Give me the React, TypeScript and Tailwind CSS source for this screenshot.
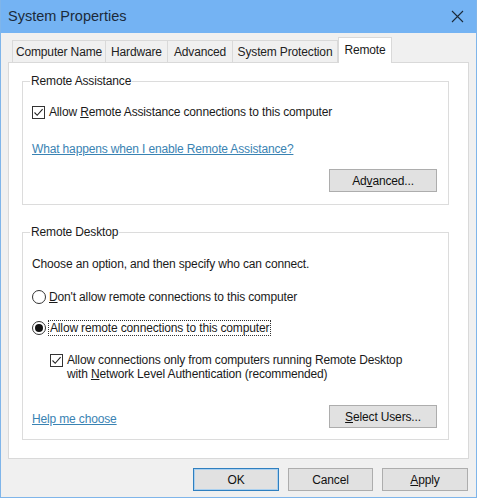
import React from "react";

const font = { fontFamily: '"Liberation Sans", Arial, sans-serif', letterSpacing: "-0.15px" };

function CheckBox() {
  return (
    <span className="w-[13px] h-[13px] shrink-0 border border-[#333] bg-white flex items-center justify-center">
      <svg width="11" height="11" viewBox="0 0 11 11">
        <path d="M1.5 5.5 L4.2 8.3 L9.6 2.2" fill="none" stroke="#222" strokeWidth="1.1" />
      </svg>
    </span>
  );
}

function Radio({ on }: { on?: boolean }) {
  return (
    <span className="w-[14px] h-[14px] shrink-0 rounded-full border border-[#333] bg-white flex items-center justify-center">
      {on && <span className="w-[8px] h-[8px] rounded-full bg-[#111]" />}
    </span>
  );
}

function Btn({ children, primary }: { children: React.ReactNode; primary?: boolean }) {
  return (
    <div
      className={
        "h-[23px] flex items-center justify-center bg-[#e1e1e1] text-[#111] " +
        (primary ? "border border-[#2f7fbf] shadow-[inset_0_0_0_1px_#aad0ef]" : "border border-[#adadad]")
      }
    >
      {children}
    </div>
  );
}

const tabs = [
  { label: "Computer Name", w: "w-[94px]" },
  { label: "Hardware", w: "w-[63px]" },
  { label: "Advanced", w: "w-[66px]" },
  { label: "System Protection", w: "w-[106px]" },
];

export default function App() {
  return (
    <div className="w-[477px] h-[500px] bg-white text-[12px] text-[#1a1a1a]" style={font}>
      <div className="h-[498px] flex flex-col border-x border-b border-[#7fb5ea] bg-[#f0f0f0]">
        <div className="h-[33px] shrink-0 bg-[#74b3f3] flex items-center justify-between pl-[7px] pr-[12px]">
          <span className="text-[14.5px] text-[#1b2a3a] tracking-normal">System Properties</span>
          <svg width="13" height="13" viewBox="0 0 13 13">
            <path d="M1 1 L12 12 M12 1 L1 12" stroke="#1b2a3a" strokeWidth="1.1" />
          </svg>
        </div>

        <div className="flex items-end pl-[11px] pt-[4px] h-[29px]">
          {tabs.map((t) => (
            <div
              key={t.label}
              className={`${t.w} h-[22px] -mr-px border border-b-0 border-[#d9d9d9] bg-[#f0f0f0] flex items-center justify-center text-[#222]`}
            >
              {t.label}
            </div>
          ))}
          <div className="w-[54px] h-[26px] ml-px relative z-10 mb-[-1px] border border-b-0 border-[#d9d9d9] bg-white flex items-start justify-center pt-[3px]">
            Remote
          </div>
        </div>

        <div className="mx-[7px] h-[397px] border border-[#d9d9d9] bg-white pl-[13px] pr-[19px] pt-[10px]">
          <fieldset className="border border-[#dcdcdc] px-[9px] pb-[12px]">
            <legend className="px-[1px] leading-[16px] ml-[-2px]">Remote Assistance</legend>
            <div className="mt-[16px] h-[14px] flex items-center gap-[4px]">
              <CheckBox />
              <span>
                Allow <span className="underline">R</span>emote Assistance connections to this computer
              </span>
            </div>
            <div className="mt-[23px] h-[14px] flex items-center">
              <span className="text-[#3a83b3] underline">What happens when I enable Remote Assistance?</span>
            </div>
            <div className="mt-[13px] flex justify-end pr-[2px]">
              <div className="w-[108px]">
                <Btn>
                  <span>
                    Ad<span className="underline">v</span>anced...
                  </span>
                </Btn>
              </div>
            </div>
          </fieldset>

          <fieldset className="mt-[19px] border border-[#dcdcdc] px-[9px] pb-[11px]">
            <legend className="px-[1px] leading-[16px] ml-[-2px]">Remote Desktop</legend>
            <div className="mt-[17px] h-[14px] flex items-center">Choose an option, and then specify who can connect.</div>
            <div className="mt-[18px] h-[16px] flex items-center gap-[3px]">
              <Radio />
              <span>
                <span className="underline">D</span>on't allow remote connections to this computer
              </span>
            </div>
            <div className="mt-[15px] h-[16px] flex items-center gap-[2px]">
              <Radio on />
              <span className="border border-dotted border-[#333] px-px leading-[14px]">
                Allow remote connections to this computer
              </span>
            </div>
            <div className="mt-[17px] pl-[18px] flex items-start gap-[4px]">
              <div className="pt-[1px]">
                <CheckBox />
              </div>
              <div className="leading-[14px]">
                Allow connections only from computers running Remote Desktop
                <br />
                with <span className="underline">N</span>etwork Level Authentication (recommended)
              </div>
            </div>
            <div className="mt-[24px] flex items-center justify-between pr-[2px]">
              <span className="text-[#3a83b3] underline pt-[5px]">Help me choose</span>
              <div className="w-[108px]">
                <Btn>
                  <span>
                    <span className="underline">S</span>elect Users...
                  </span>
                </Btn>
              </div>
            </div>
          </fieldset>
        </div>

        <div className="mt-[9px] flex justify-end gap-[9px] pr-[8px]">
          <div className="w-[86px]">
            <Btn primary>OK</Btn>
          </div>
          <div className="w-[85px]">
            <Btn>Cancel</Btn>
          </div>
          <div className="w-[86px]">
            <Btn>
              <span>
                <span className="underline">A</span>pply
              </span>
            </Btn>
          </div>
        </div>
      </div>
    </div>
  );
}
